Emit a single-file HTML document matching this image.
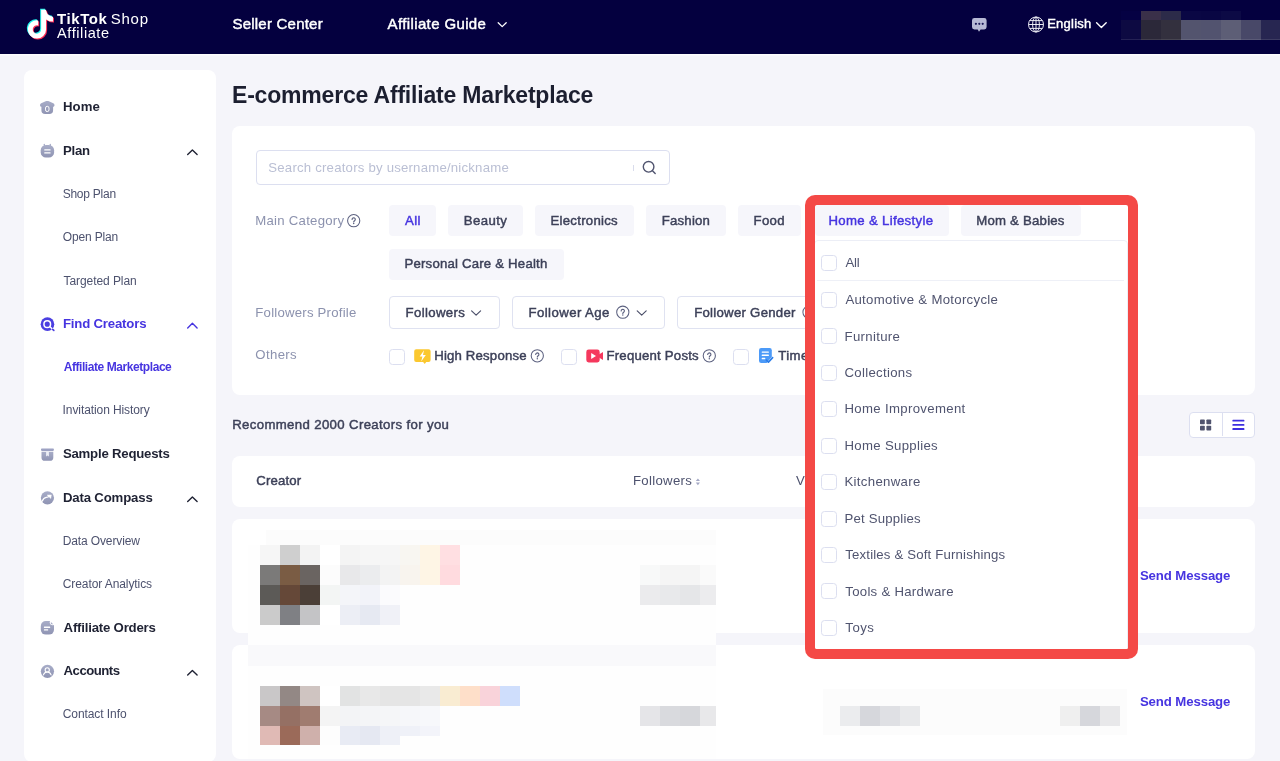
<!DOCTYPE html>
<html lang="en">
<head>
<meta charset="utf-8">
<title>E-commerce Affiliate Marketplace</title>
<style>
*{box-sizing:border-box;margin:0;padding:0}
html,body{width:1280px;height:761px;overflow:hidden}
body{font-family:"Liberation Sans",sans-serif;background:#f5f5fa;color:#1f2233;position:relative}
#app{position:absolute;left:0;top:0;width:1280px;height:761px;will-change:transform}
.t{position:absolute;white-space:nowrap;line-height:20px;height:20px}
.b{position:absolute}
svg{position:absolute;overflow:visible}
#hdr{position:absolute;left:0;top:0;width:1280px;height:54px;background:#04003f;overflow:hidden}
#side{position:absolute;left:24px;top:70px;width:192px;height:692px;background:#fff;border-radius:8px}
#panel{position:absolute;left:232px;top:126px;width:1023px;height:269px;background:#fff;border-radius:8px}
#thead{position:absolute;left:232px;top:456px;width:1023px;height:51px;background:#fff;border-radius:8px}
.row{position:absolute;left:232px;width:1023px;height:114px;background:#fff;border-radius:8px}
.chip{position:absolute;height:31px;background:#f6f6fb;border-radius:4px}
.dd{position:absolute;height:33px;border:1px solid #dfe2f1;border-radius:4px;background:#fff}
.cb{position:absolute;width:16px;height:16px;border:1px solid #dcdff0;border-radius:3.5px;background:#fff}
#mosaic{position:absolute;left:0;top:0;width:1280px;height:761px;pointer-events:none}
#mosaic i,#hdr i{position:absolute;display:block}
#red{position:absolute;left:805.3px;top:194.8px;width:332.8px;height:464.4px;background:#f44946;border-radius:10px}
#pop{position:absolute;left:815px;top:204.7px;width:313.2px;height:444.7px;background:#fff;border-radius:2px;overflow:hidden}
#toggle{position:absolute;left:1189.3px;top:412.3px;width:65.6px;height:25.4px;border:1px solid #dcdff0;border-radius:4px;background:#fff}
</style>
</head>
<body>
<div id="app">
<div id="hdr">
<svg width="1280" height="54" style="left:0;top:0"><path transform="translate(26.80,8.80) scale(0.05625)" d="M448,209.91a210.06,210.06,0,0,1-122.77-39.25V349.38A162.55,162.55,0,1,1,185,188.31V278.2a74.62,74.62,0,1,0,52.23,71.18V0l88,0a121.18,121.18,0,0,0,1.86,22.17h0A122.18,122.18,0,0,0,381,102.39a121.43,121.43,0,0,0,67,20.14Z" fill="#25f4ee"/><path transform="translate(28.80,10.80) scale(0.05625)" d="M448,209.91a210.06,210.06,0,0,1-122.77-39.25V349.38A162.55,162.55,0,1,1,185,188.31V278.2a74.62,74.62,0,1,0,52.23,71.18V0l88,0a121.18,121.18,0,0,0,1.86,22.17h0A122.18,122.18,0,0,0,381,102.39a121.43,121.43,0,0,0,67,20.14Z" fill="#fe2c55"/><path transform="translate(27.80,9.80) scale(0.05625)" d="M448,209.91a210.06,210.06,0,0,1-122.77-39.25V349.38A162.55,162.55,0,1,1,185,188.31V278.2a74.62,74.62,0,1,0,52.23,71.18V0l88,0a121.18,121.18,0,0,0,1.86,22.17h0A122.18,122.18,0,0,0,381,102.39a121.43,121.43,0,0,0,67,20.14Z" fill="#fff"/></svg>
<span class="t" style="left:57.1px;top:9.02px;font-size:15px;color:#fff;letter-spacing:0.55px;font-weight:700">TikTok</span>
<span class="t" style="left:110.8px;top:9.02px;font-size:15px;color:#fff;letter-spacing:0.74px">Shop</span>
<span class="t" style="left:57.1px;top:23.02px;font-size:14.5px;color:#fff;letter-spacing:0.58px">Affiliate</span>
<span class="t" style="left:232.4px;top:14.02px;font-size:15px;color:#fff;letter-spacing:0.23px;-webkit-text-stroke:0.45px">Seller Center</span>
<span class="t" style="left:387.6px;top:14.02px;font-size:15px;color:#fff;letter-spacing:0.37px;-webkit-text-stroke:0.45px">Affiliate Guide</span>
<span class="t" style="left:1047.2px;top:14.02px;font-size:13px;color:#fff;letter-spacing:0.24px;-webkit-text-stroke:0.45px">English</span>
<svg width="1280" height="761" style="left:0;top:0"><path d="M498.20 22.80L502.20 26.60L506.20 22.80" fill="none" stroke="#fff" stroke-width="1.3" stroke-linecap="round" stroke-linejoin="round"/></svg>
<svg width="1280" height="54" style="left:0;top:0"><path d="M974.4 18h9.8a2.4 2.4 0 0 1 2.4 2.4v6.6a2.4 2.4 0 0 1-2.4 2.4h-3.6l-1.6 2.3-1.3-2.3h-3.3a2.4 2.4 0 0 1-2.4-2.4v-6.6a2.4 2.4 0 0 1 2.4-2.4z" fill="#b7b9d5"/><circle cx="975.9" cy="23.8" r="1.1" fill="#1b1958"/><circle cx="979.3" cy="23.8" r="1.1" fill="#1b1958"/><circle cx="982.7" cy="23.8" r="1.1" fill="#1b1958"/></svg>
<svg width="1280" height="54" style="left:0;top:0"><g fill="none" stroke="#f4f4fb" stroke-width=".95"><circle cx="1036" cy="24.5" r="7.5"/><ellipse cx="1036" cy="24.5" rx="3.4" ry="7.5"/><path d="M1036 17v15M1028.5 24.5h15M1029.6 20.6h12.8M1029.6 28.4h12.8"/></g></svg>
<svg width="1280" height="761" style="left:0;top:0"><path d="M1096.60 22.80L1101.40 27.40L1106.20 22.80" fill="none" stroke="#fff" stroke-width="1.4" stroke-linecap="round" stroke-linejoin="round"/></svg>
<i style="left:1121px;top:11px;width:20px;height:9px;background:#050143"></i><i style="left:1141px;top:11px;width:20px;height:9px;background:#3a3049"></i><i style="left:1161px;top:11px;width:20px;height:9px;background:#2c2b49"></i><i style="left:1181px;top:11px;width:20px;height:9px;background:#0a0744"></i><i style="left:1201px;top:11px;width:20px;height:9px;background:#090643"></i><i style="left:1221px;top:11px;width:20px;height:9px;background:#0c0a45"></i><i style="left:1121px;top:20px;width:20px;height:20px;background:#0d0a42"></i><i style="left:1141px;top:20px;width:20px;height:20px;background:#2b2839"></i><i style="left:1161px;top:20px;width:20px;height:20px;background:#33303e"></i><i style="left:1181px;top:20px;width:20px;height:20px;background:#53546e"></i><i style="left:1201px;top:20px;width:20px;height:20px;background:#52536f"></i><i style="left:1221px;top:20px;width:20px;height:20px;background:#5d5e76"></i><i style="left:1241px;top:20px;width:20px;height:20px;background:#484868"></i><i style="left:1261px;top:20px;width:20px;height:20px;background:#272651"></i>
<i style="left:1121px;top:39px;width:159px;height:1px;background:rgba(255,255,255,.10)"></i>
</div>
<div class="b" style="left:0;top:54px;width:1280px;height:1px;background:#fdfdfe"></div><div class="b" style="left:0;top:55px;width:1280px;height:1px;background:#f9f9fc"></div>
<div id="side">
<span class="t" style="left:38.9px;top:27.02px;font-size:13.2px;color:#1f2233;letter-spacing:0.10px;font-weight:700">Home</span>
<span class="t" style="left:38.9px;top:71.02px;font-size:13.2px;color:#1f2233;letter-spacing:-0.23px;font-weight:700">Plan</span>
<span class="t" style="left:38.7px;top:114.02px;font-size:12px;color:#4d526e;letter-spacing:-0.25px">Shop Plan</span>
<span class="t" style="left:38.7px;top:157.02px;font-size:12px;color:#4d526e;letter-spacing:-0.14px">Open Plan</span>
<span class="t" style="left:39.6px;top:201.02px;font-size:12px;color:#4d526e;letter-spacing:-0.08px">Targeted Plan</span>
<span class="t" style="left:38.9px;top:244.02px;font-size:13.2px;color:#4634e0;letter-spacing:-0.18px;font-weight:700">Find Creators</span>
<span class="t" style="left:39.7px;top:287.02px;font-size:12px;color:#4634e0;letter-spacing:-0.43px;font-weight:700">Affiliate Marketplace</span>
<span class="t" style="left:38.6px;top:330.02px;font-size:12px;color:#4d526e;letter-spacing:-0.09px">Invitation History</span>
<span class="t" style="left:38.9px;top:374.02px;font-size:13.2px;color:#1f2233;letter-spacing:-0.21px;font-weight:700">Sample Requests</span>
<span class="t" style="left:38.9px;top:418.02px;font-size:13.2px;color:#1f2233;letter-spacing:-0.16px;font-weight:700">Data Compass</span>
<span class="t" style="left:38.7px;top:461.02px;font-size:12px;color:#4d526e;letter-spacing:-0.12px">Data Overview</span>
<span class="t" style="left:38.7px;top:504.02px;font-size:12px;color:#4d526e;letter-spacing:-0.08px">Creator Analytics</span>
<span class="t" style="left:39.6px;top:548.02px;font-size:13.2px;color:#1f2233;letter-spacing:-0.20px;font-weight:700">Affiliate Orders</span>
<span class="t" style="left:39.6px;top:591.02px;font-size:13.2px;color:#1f2233;letter-spacing:-0.52px;font-weight:700">Accounts</span>
<span class="t" style="left:38.7px;top:634.02px;font-size:12px;color:#4d526e;letter-spacing:-0.07px">Contact Info</span>
<svg width="192" height="692" style="left:0;top:0"><g transform="translate(-24,-70)"><defs><linearGradient id="gi" x1="0" y1="0" x2="0" y2="1"><stop offset="0" stop-color="#a8adc8"/><stop offset="1" stop-color="#8f94b3"/></linearGradient></defs><path d="M40 105.2c0-.9.4-1.5 1.2-1.9l5-2.2c.7-.3 1.400-.3 2.100 0l5 2.200c.8.400 1.200 1 1.200 1.900 0 .900-.600 1.500-1.400 1.500v3.600a3.800 3.800 0 0 1-3.800 3.800h-4.100a3.800 3.800 0 0 1-3.800-3.800v-3.600c-.8 0-1.400-.6-1.400-1.500z" fill="url(#gi)"/><rect x="45.500" y="106.300" width="3.500" height="5.300" rx="1.750" fill="none" stroke="#fff" stroke-width="1"/><rect x="40.700" y="145" width="13.400" height="12.600" rx="5.200" fill="url(#gi)"/><rect x="43.800" y="143.700" width="1.200" height="2.600" rx=".6" fill="#a8adc8"/><rect x="49.800" y="143.700" width="1.200" height="2.600" rx=".6" fill="#a8adc8"/><rect x="44.200" y="149.300" width="6.400" height="1.300" rx=".5" fill="#fff"/><rect x="44.200" y="152.300" width="6.400" height="1.300" rx=".5" fill="#fff"/><circle cx="47.450" cy="324.150" r="6.800" fill="#4b3fe1"/><circle cx="47.250" cy="324.150" r="3.300" fill="none" stroke="#fff" stroke-width="1.500"/><path d="M49.700 326.500l2.900 2.800" stroke="#fff" stroke-width="1.500" stroke-linecap="butt"/><path d="M52.700 329.400l1.100 1" stroke="#4b3fe1" stroke-width="1.700" stroke-linecap="round"/><rect x="41" y="448.600" width="12.900" height="2.300" rx=".8" fill="#9da2c3"/><path d="M41.500 451.800h11.800v5.600a3.400 3.400 0 0 1-3.400 3.400h-5a3.400 3.400 0 0 1-3.400-3.400z" fill="url(#gi)"/><path d="M46.100 451.800h2.800v4.800l-1.400-1.100-1.400 1.100z" fill="#eceef6"/><circle cx="47.450" cy="497.800" r="6.600" fill="url(#gi)"/><path d="M42.300 501c.9-2.400 2.300-3.500 3.900-3.700 1.300-.1 2.400-.4 3.100-1.200" fill="none" stroke="#fff" stroke-width="1.250" stroke-linecap="round"/><path d="M47.200 495.100l4.100-.2-.5 3.500z" fill="#fff" stroke="#fff" stroke-width=".5" stroke-linejoin="round"/><rect x="40.800" y="621" width="13.200" height="13.600" rx="5" fill="url(#gi)"/><circle cx="52.700" cy="622.300" r="2.900" fill="#fff"/><path d="M50.900 621.900l2.300 2.300h-1.500a.8.800 0 0 1-.8-.8z" fill="#a8adc8"/><rect x="43.900" y="626.500" width="6.300" height="1.400" rx=".5" fill="#fff"/><rect x="43.900" y="629.200" width="4.300" height="1.400" rx=".5" fill="#fff"/><circle cx="47.450" cy="671.350" r="6.600" fill="url(#gi)"/><circle cx="47.250" cy="669.900" r="2.100" fill="none" stroke="#fff" stroke-width="1.100"/><path d="M43.400 674.900c.7-1.900 2.100-2.900 3.850-2.900s3.150 1 3.850 2.900" fill="none" stroke="#fff" stroke-width="1.100" stroke-linecap="round"/></g></svg>
<svg width="192" height="692" style="left:0;top:0"><g transform="translate(-24,-70)"><path d="M187.700 154.5L192.400 150.1L197.100 154.5" fill="none" stroke="#1f2233" stroke-width="1.400" stroke-linecap="round" stroke-linejoin="round"/><path d="M187.700 327.9L192.400 323.3L197.100 327.9" fill="none" stroke="#4634e0" stroke-width="1.400" stroke-linecap="round" stroke-linejoin="round"/><path d="M187.700 501.4L192.400 496.9L197.100 501.4" fill="none" stroke="#1f2233" stroke-width="1.400" stroke-linecap="round" stroke-linejoin="round"/><path d="M187.700 674.9L192.400 670.4L197.100 674.9" fill="none" stroke="#1f2233" stroke-width="1.400" stroke-linecap="round" stroke-linejoin="round"/></g></svg>
</div>
<span class="t" style="left:232.0px;top:85.02px;font-size:23px;color:#1c1f30;letter-spacing:-0.19px;font-weight:700">E-commerce Affiliate Marketplace</span>
<span class="t" style="left:232.2px;top:415.02px;font-size:13.2px;color:#3d4159;letter-spacing:0.36px;-webkit-text-stroke:0.45px">Recommend 2000 Creators for you</span>
<div id="panel">
<div class="b" style="left:24px;top:24px;width:414px;height:35px;border:1px solid #dcdff0;border-radius:4px;background:#fff"></div>
<div class="b" style="left:401px;top:39px;width:1px;height:5.5px;background:#d9dcec"></div>
<div class="chip" style="left:157px;top:79px;width:47px"></div>
<div class="chip" style="left:216px;top:79px;width:75px"></div>
<div class="chip" style="left:303px;top:79px;width:99px"></div>
<div class="chip" style="left:414px;top:79px;width:79.8px"></div>
<div class="chip" style="left:505.8px;top:79px;width:63px"></div>
<div class="chip" style="left:157px;top:122.7px;width:174.5px"></div>
<div class="dd" style="left:157px;top:169.8px;width:110.5px"></div>
<div class="dd" style="left:280px;top:169.8px;width:152.8px"></div>
<div class="dd" style="left:445px;top:169.8px;width:163px"></div>
<div class="cb" style="left:157.2px;top:222.8px"></div>
<div class="cb" style="left:329.2px;top:222.8px"></div>
<div class="cb" style="left:501px;top:222.8px"></div>
<span class="t" style="left:36.3px;top:32.02px;font-size:13.2px;color:#babfd4;letter-spacing:0.21px">Search creators by username/nickname</span>
<span class="t" style="left:23.3px;top:85.02px;font-size:13.2px;color:#8c92ae;letter-spacing:0.25px">Main Category</span>
<span class="t" style="left:173.1px;top:85.02px;font-size:13.2px;color:#4634e0;letter-spacing:0.30px;-webkit-text-stroke:0.45px">All</span>
<span class="t" style="left:231.7px;top:85.02px;font-size:13.2px;color:#3d4159;letter-spacing:0.41px;-webkit-text-stroke:0.45px">Beauty</span>
<span class="t" style="left:318.5px;top:85.02px;font-size:13.2px;color:#3d4159;letter-spacing:0.27px;-webkit-text-stroke:0.45px">Electronics</span>
<span class="t" style="left:429.7px;top:85.02px;font-size:13.2px;color:#3d4159;letter-spacing:0.22px;-webkit-text-stroke:0.45px">Fashion</span>
<span class="t" style="left:521.5px;top:85.02px;font-size:13.2px;color:#3d4159;letter-spacing:0.32px;-webkit-text-stroke:0.45px">Food</span>
<span class="t" style="left:172.5px;top:128.02px;font-size:13.2px;color:#3d4159;letter-spacing:0.20px;-webkit-text-stroke:0.45px">Personal Care &amp; Health</span>
<span class="t" style="left:23.3px;top:177.02px;font-size:13.2px;color:#8c92ae;letter-spacing:0.22px">Followers Profile</span>
<span class="t" style="left:173.5px;top:177.02px;font-size:13.2px;color:#3d4159;letter-spacing:0.37px;-webkit-text-stroke:0.45px">Followers</span>
<span class="t" style="left:296.5px;top:177.02px;font-size:13.2px;color:#3d4159;letter-spacing:0.42px;-webkit-text-stroke:0.45px">Follower Age</span>
<span class="t" style="left:462.2px;top:177.02px;font-size:13.2px;color:#3d4159;letter-spacing:0.27px;-webkit-text-stroke:0.45px">Follower Gender</span>
<span class="t" style="left:23.3px;top:219.02px;font-size:13.2px;color:#8c92ae;letter-spacing:0.36px">Others</span>
<span class="t" style="left:202.2px;top:220.02px;font-size:13.2px;color:#3d4159;letter-spacing:0.18px;-webkit-text-stroke:0.45px">High Response</span>
<span class="t" style="left:374.5px;top:220.02px;font-size:13.2px;color:#3d4159;letter-spacing:0.21px;-webkit-text-stroke:0.45px">Frequent Posts</span>
<span class="t" style="left:546.2px;top:220.02px;font-size:13.2px;color:#3d4159;letter-spacing:0.45px;-webkit-text-stroke:0.45px">Timely</span>
<svg width="1023" height="269" style="left:0;top:0"><g transform="translate(-232,-126)"><circle cx="648.600" cy="166.800" r="5.300" fill="none" stroke="#50546f" stroke-width="1.400"/><path d="M652.500 170.800l2.700 2.700" stroke="#50546f" stroke-width="1.400" stroke-linecap="round"/><path d="M471.600 310.900l4.500 4.300 4.500-4.300" fill="none" stroke="#4a4e68" stroke-width="1.150" stroke-linecap="round" stroke-linejoin="round"/><path d="M637.200 310.900l4.500 4.300 4.500-4.300" fill="none" stroke="#4a4e68" stroke-width="1.150" stroke-linecap="round" stroke-linejoin="round"/><path d="M416.200 349.300h12.400a2 2 0 0 1 2 2v8.800a2 2 0 0 1-2 2h-2.400l-1.400 1.800-1.700-1.800h-6.900a2 2 0 0 1-2-2v-8.800a2 2 0 0 1 2-2z" fill="#fbc82f"/><path d="M424 350.300l-4.300 6.200h2.700l-1.200 5.100 4.600-6.700h-2.800z" fill="#fff"/><rect x="586.300" y="349.600" width="13.400" height="12.800" rx="2.400" fill="#f5385d"/><path d="M599 354.500l4-2.600v8.200l-4-2.600z" fill="#f5385d"/><path d="M591.200 352.900l4.800 3.100-4.800 3.100z" fill="#fff"/><path d="M761.200 348h8.400a2.200 2.200 0 0 1 2.200 2.200v6.600l-5.200 6.200h-5.400a2.200 2.200 0 0 1-2.200-2.200v-10.600a2.200 2.200 0 0 1 2.200-2.200z" fill="#4c9af8"/><rect x="761.700" y="351.400" width="7.200" height="1.400" rx=".5" fill="#fff"/><rect x="761.700" y="354.600" width="7.200" height="1.400" rx=".5" fill="#fff"/><rect x="761.700" y="357.800" width="3.600" height="1.400" rx=".5" fill="#fff"/><path d="M766.400 360.200l2 2 4.200-4.600" fill="none" stroke="#2b7de9" stroke-width="1.700" stroke-linecap="round" stroke-linejoin="round"/></g></svg>
</div>
<svg width="1280" height="761" style="left:0;top:0"><circle cx="353.7" cy="220.7" r="6.1" fill="none" stroke="#5d6280" stroke-width="1.05"/><path d="M352.09999999999997 219.39999999999998a1.6 1.6 0 1 1 2.5 1.35c-.6.4-.9.7-.9 1.25" fill="none" stroke="#5d6280" stroke-width="1.15" stroke-linecap="round"/><circle cx="353.7" cy="223.6" r=".75" fill="#5d6280"/></svg><svg width="1280" height="761" style="left:0;top:0"><circle cx="622.8" cy="312.2" r="6.1" fill="none" stroke="#5d6280" stroke-width="1.05"/><path d="M621.1999999999999 310.9a1.6 1.6 0 1 1 2.5 1.35c-.6.4-.9.7-.9 1.25" fill="none" stroke="#5d6280" stroke-width="1.15" stroke-linecap="round"/><circle cx="622.8" cy="315.09999999999997" r=".75" fill="#5d6280"/></svg><svg width="1280" height="761" style="left:0;top:0"><circle cx="809" cy="312.2" r="6.1" fill="none" stroke="#5d6280" stroke-width="1.05"/><path d="M807.4 310.9a1.6 1.6 0 1 1 2.5 1.35c-.6.4-.9.7-.9 1.25" fill="none" stroke="#5d6280" stroke-width="1.15" stroke-linecap="round"/><circle cx="809" cy="315.09999999999997" r=".75" fill="#5d6280"/></svg><svg width="1280" height="761" style="left:0;top:0"><circle cx="537.3" cy="355.8" r="6.1" fill="none" stroke="#5d6280" stroke-width="1.05"/><path d="M535.6999999999999 354.5a1.6 1.6 0 1 1 2.5 1.35c-.6.4-.9.7-.9 1.25" fill="none" stroke="#5d6280" stroke-width="1.15" stroke-linecap="round"/><circle cx="537.3" cy="358.7" r=".75" fill="#5d6280"/></svg><svg width="1280" height="761" style="left:0;top:0"><circle cx="709.3" cy="355.8" r="6.1" fill="none" stroke="#5d6280" stroke-width="1.05"/><path d="M707.6999999999999 354.5a1.6 1.6 0 1 1 2.5 1.35c-.6.4-.9.7-.9 1.25" fill="none" stroke="#5d6280" stroke-width="1.15" stroke-linecap="round"/><circle cx="709.3" cy="358.7" r=".75" fill="#5d6280"/></svg>
<div id="toggle"><div class="b" style="left:32.100px;top:0;width:1px;height:23px;background:#dcdff0"></div><svg width="64" height="23" style="left:0;top:0"><g fill="#50546f"><rect x="10" y="6.400" width="4.800" height="4.800" rx=".8"/><rect x="16.400" y="6.400" width="4.800" height="4.800" rx=".8"/><rect x="10" y="12.700" width="4.800" height="4.800" rx=".8"/><rect x="16.400" y="12.700" width="4.800" height="4.800" rx=".8"/></g><g fill="#3d2fe0"><rect x="42.400" y="6.700" width="12" height="1.900" rx=".6"/><rect x="42.400" y="10.900" width="12" height="1.900" rx=".6"/><rect x="42.400" y="15.100" width="12" height="1.900" rx=".6"/></g></svg></div>
<div id="thead"><span class="t" style="left:24.3px;top:15.02px;font-size:13.2px;color:#3d4159;letter-spacing:0.16px;-webkit-text-stroke:0.45px">Creator</span>
<span class="t" style="left:400.9px;top:15.02px;font-size:13.2px;color:#4d526e;letter-spacing:0.32px">Followers</span>
<span class="t" style="left:564.0px;top:15.02px;font-size:13.2px;color:#4d526e;letter-spacing:0.23px">Video Views</span><svg width="1023" height="51" style="left:0;top:0"><path d="M695.800 481l2.100-2.600 2.100 2.600zM695.800 482.600l2.100 2.600 2.100-2.600z" fill="#a4a8c4" transform="translate(-232,-456)"/></svg></div>
<div class="row" style="top:519px"><span class="t" style="left:907.9px;top:47.02px;font-size:13.2px;color:#4634e0;letter-spacing:-0.10px;font-weight:700">Send Message</span></div>
<div class="row" style="top:645px"><span class="t" style="left:907.9px;top:47.02px;font-size:13.2px;color:#4634e0;letter-spacing:-0.10px;font-weight:700">Send Message</span></div>
<div id="mosaic"><i style="left:266px;top:530px;width:450px;height:15px;background:#fcfcfc"></i><i style="left:248px;top:545px;width:468px;height:100px;background:#fefefe"></i><i style="left:248px;top:645px;width:468px;height:20.5px;background:#f9f9fb"></i><i style="left:248px;top:665.5px;width:468px;height:93px;background:#fefefe"></i><i style="left:822.6px;top:688.5px;width:304.4px;height:46.5px;background:#fcfcfc"></i><i style="left:260px;top:545px;width:20px;height:20px;background:#f6f6f6"></i><i style="left:280px;top:545px;width:20px;height:20px;background:#cfcfcf"></i><i style="left:300px;top:545px;width:20px;height:20px;background:#f3f3f3"></i><i style="left:320px;top:545px;width:20px;height:20px;background:#ffffff"></i><i style="left:340px;top:545px;width:20px;height:20px;background:#f4f4f4"></i><i style="left:360px;top:545px;width:20px;height:20px;background:#f6f6f6"></i><i style="left:380px;top:545px;width:20px;height:20px;background:#f6f6f6"></i><i style="left:400px;top:545px;width:20px;height:20px;background:#f8f6f1"></i><i style="left:420px;top:545px;width:20px;height:20px;background:#fef5e5"></i><i style="left:440px;top:545px;width:20px;height:20px;background:#ffdfe2"></i><i style="left:260px;top:565px;width:20px;height:20px;background:#7b7a79"></i><i style="left:280px;top:565px;width:20px;height:20px;background:#7a5c44"></i><i style="left:300px;top:565px;width:20px;height:20px;background:#6a6461"></i><i style="left:320px;top:565px;width:20px;height:20px;background:#fcfcfc"></i><i style="left:340px;top:565px;width:20px;height:20px;background:#e8e8ea"></i><i style="left:360px;top:565px;width:20px;height:20px;background:#ebecee"></i><i style="left:380px;top:565px;width:20px;height:20px;background:#f3f3f3"></i><i style="left:400px;top:565px;width:20px;height:20px;background:#f8f4ee"></i><i style="left:420px;top:565px;width:20px;height:20px;background:#fef5e5"></i><i style="left:440px;top:565px;width:20px;height:20px;background:#ffdbdf"></i><i style="left:260px;top:585px;width:20px;height:20px;background:#5c5a57"></i><i style="left:280px;top:585px;width:20px;height:20px;background:#654838"></i><i style="left:300px;top:585px;width:20px;height:20px;background:#4b3f37"></i><i style="left:320px;top:585px;width:20px;height:20px;background:#f3f5f4"></i><i style="left:340px;top:585px;width:20px;height:20px;background:#f4f5f9"></i><i style="left:360px;top:585px;width:20px;height:20px;background:#f2f3f9"></i><i style="left:380px;top:585px;width:20px;height:20px;background:#fbfbfd"></i><i style="left:260px;top:605px;width:20px;height:20px;background:#cbcbcb"></i><i style="left:280px;top:605px;width:20px;height:20px;background:#7f8084"></i><i style="left:300px;top:605px;width:20px;height:20px;background:#c4c4c6"></i><i style="left:320px;top:605px;width:20px;height:20px;background:#ffffff"></i><i style="left:340px;top:605px;width:20px;height:20px;background:#eceef5"></i><i style="left:360px;top:605px;width:20px;height:20px;background:#e6e9f2"></i><i style="left:380px;top:605px;width:20px;height:20px;background:#f0f1f7"></i><i style="left:260px;top:686px;width:20px;height:20px;background:#c9c7c8"></i><i style="left:280px;top:686px;width:20px;height:20px;background:#938885"></i><i style="left:300px;top:686px;width:20px;height:20px;background:#cfc4c1"></i><i style="left:320px;top:686px;width:20px;height:20px;background:#ffffff"></i><i style="left:340px;top:686px;width:20px;height:20px;background:#e2e3e3"></i><i style="left:360px;top:686px;width:20px;height:20px;background:#e8e8e8"></i><i style="left:380px;top:686px;width:20px;height:20px;background:#e5e5e5"></i><i style="left:400px;top:686px;width:20px;height:20px;background:#e5e5e5"></i><i style="left:420px;top:686px;width:20px;height:20px;background:#e9e9e9"></i><i style="left:440px;top:686px;width:20px;height:20px;background:#f9ecd2"></i><i style="left:460px;top:686px;width:20px;height:20px;background:#fedfc9"></i><i style="left:480px;top:686px;width:20px;height:20px;background:#f9d3da"></i><i style="left:500px;top:686px;width:20px;height:20px;background:#cfdefc"></i><i style="left:260px;top:706px;width:20px;height:20px;background:#a68a84"></i><i style="left:280px;top:706px;width:20px;height:20px;background:#957064"></i><i style="left:300px;top:706px;width:20px;height:20px;background:#a07c70"></i><i style="left:320px;top:706px;width:20px;height:20px;background:#f4f4f4"></i><i style="left:340px;top:706px;width:20px;height:20px;background:#f3f4f6"></i><i style="left:360px;top:706px;width:20px;height:20px;background:#f4f5f7"></i><i style="left:380px;top:706px;width:20px;height:20px;background:#f5f6f8"></i><i style="left:400px;top:706px;width:20px;height:20px;background:#f6f7fa"></i><i style="left:420px;top:706px;width:20px;height:20px;background:#f7f8fb"></i><i style="left:260px;top:726px;width:20px;height:19px;background:#e0bab5"></i><i style="left:280px;top:726px;width:20px;height:19px;background:#9b6a59"></i><i style="left:300px;top:726px;width:20px;height:19px;background:#cfb0ab"></i><i style="left:320px;top:726px;width:20px;height:19px;background:#fdfdfd"></i><i style="left:340px;top:726px;width:20px;height:19px;background:#e8ebf4"></i><i style="left:360px;top:726px;width:20px;height:19px;background:#e5e8f2"></i><i style="left:380px;top:726px;width:20px;height:19px;background:#eef0f7"></i><i style="left:400px;top:726px;width:20px;height:10px;background:#eff1f8"></i><i style="left:420px;top:726px;width:20px;height:10px;background:#f3f4fa"></i><i style="left:640px;top:565px;width:20px;height:20px;background:#f8f9f9"></i><i style="left:660px;top:565px;width:20px;height:20px;background:#f5f5f5"></i><i style="left:680px;top:565px;width:20px;height:20px;background:#f5f5f5"></i><i style="left:700px;top:565px;width:16.4px;height:20px;background:#fafafa"></i><i style="left:640px;top:585px;width:20px;height:20px;background:#ebebed"></i><i style="left:660px;top:585px;width:20px;height:20px;background:#e8e9eb"></i><i style="left:680px;top:585px;width:20px;height:20px;background:#e5e6e8"></i><i style="left:700px;top:585px;width:16.4px;height:20px;background:#ececee"></i><i style="left:640px;top:706px;width:20px;height:20px;background:#e5e5e8"></i><i style="left:660px;top:706px;width:20px;height:20px;background:#d9dade"></i><i style="left:680px;top:706px;width:20px;height:20px;background:#d6d7db"></i><i style="left:700px;top:706px;width:16.4px;height:20px;background:#e8e8ea"></i><i style="left:840px;top:706px;width:20px;height:20px;background:#ebecee"></i><i style="left:860px;top:706px;width:20px;height:20px;background:#d6d7dc"></i><i style="left:880px;top:706px;width:20px;height:20px;background:#dfe0e4"></i><i style="left:900px;top:706px;width:20px;height:20px;background:#e8e9eb"></i><i style="left:1060px;top:706px;width:20px;height:20px;background:#efefef"></i><i style="left:1080px;top:706px;width:20px;height:20px;background:#d6d7dc"></i><i style="left:1100px;top:706px;width:20px;height:20px;background:#e8e8ea"></i></div>
<div id="red"></div>
<div id="pop">
<div class="chip" style="left:0;top:0.300px;width:133.800px"></div>
<div class="chip" style="left:146px;top:0.300px;width:120px"></div>
<div class="b" style="left:-1.5px;top:35.5px;width:314.9px;height:459.8px;border:1px solid #eceef6;border-radius:4px;background:#fff"></div>
<div class="b" style="left:2px;top:75.7px;width:307px;height:1px;background:#eef0f7"></div>
<div class="cb" style="left:6.2px;top:50.0px"></div>
<div class="cb" style="left:6.2px;top:87.2px"></div>
<div class="cb" style="left:6.2px;top:123.6px"></div>
<div class="cb" style="left:6.2px;top:160.1px"></div>
<div class="cb" style="left:6.2px;top:196.6px"></div>
<div class="cb" style="left:6.2px;top:233.0px"></div>
<div class="cb" style="left:6.2px;top:269.4px"></div>
<div class="cb" style="left:6.2px;top:305.9px"></div>
<div class="cb" style="left:6.2px;top:342.3px"></div>
<div class="cb" style="left:6.2px;top:378.8px"></div>
<div class="cb" style="left:6.2px;top:415.3px"></div>
<span class="t" style="left:13.5px;top:6.32px;font-size:13.2px;color:#4634e0;letter-spacing:0.32px;-webkit-text-stroke:0.45px">Home &amp; Lifestyle</span>
<span class="t" style="left:161.2px;top:6.32px;font-size:13.2px;color:#3d4159;letter-spacing:0.23px;-webkit-text-stroke:0.45px">Mom &amp; Babies</span>
<span class="t" style="left:30.4px;top:48.32px;font-size:13.2px;color:#50546f;letter-spacing:-0.18px">All</span>
<span class="t" style="left:30.4px;top:85.32px;font-size:13.2px;color:#50546f;letter-spacing:0.30px">Automotive &amp; Motorcycle</span>
<span class="t" style="left:29.5px;top:122.32px;font-size:13.2px;color:#50546f;letter-spacing:0.32px">Furniture</span>
<span class="t" style="left:29.5px;top:158.32px;font-size:13.2px;color:#50546f;letter-spacing:0.31px">Collections</span>
<span class="t" style="left:29.5px;top:194.32px;font-size:13.2px;color:#50546f;letter-spacing:0.33px">Home Improvement</span>
<span class="t" style="left:29.5px;top:231.32px;font-size:13.2px;color:#50546f;letter-spacing:0.31px">Home Supplies</span>
<span class="t" style="left:29.5px;top:267.32px;font-size:13.2px;color:#50546f;letter-spacing:0.32px">Kitchenware</span>
<span class="t" style="left:29.5px;top:304.32px;font-size:13.2px;color:#50546f;letter-spacing:0.19px">Pet Supplies</span>
<span class="t" style="left:30.3px;top:340.32px;font-size:13.2px;color:#50546f;letter-spacing:0.17px">Textiles &amp; Soft Furnishings</span>
<span class="t" style="left:30.3px;top:377.32px;font-size:13.2px;color:#50546f;letter-spacing:0.28px">Tools &amp; Hardware</span>
<span class="t" style="left:30.3px;top:413.32px;font-size:13.2px;color:#50546f;letter-spacing:0.50px">Toys</span>
</div>
</div>
</body>
</html>
